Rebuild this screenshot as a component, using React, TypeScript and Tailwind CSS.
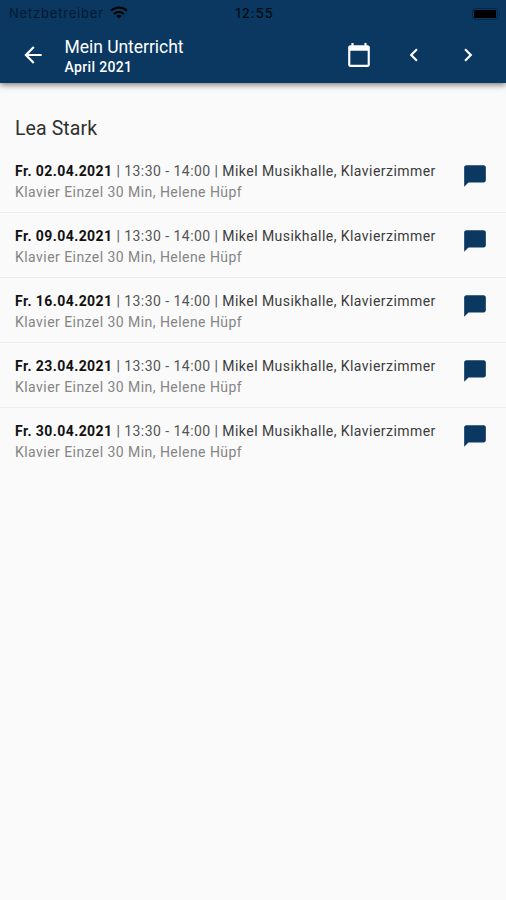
interface Lesson {
  date: string;
  time: string;
  location: string;
  details: string;
}

const lessons: Lesson[] = ["02", "09", "16", "23", "30"].map((day) => ({
  date: `Fr. ${day}.04.2021`,
  time: "13:30 - 14:00",
  location: "Mikel Musikhalle, Klavierzimmer",
  details: "Klavier Einzel 30 Min, Helene Hüpf",
}));

const icons = {
  back: "M20 11H7.83l5.59-5.59L12 4l-8 8 8 8 1.41-1.41L7.83 13H20v-2z",
  calendar:
    "M20 3h-1V1h-2v2H7V1H5v2H4c-1.1 0-2 .9-2 2v16c0 1.1.9 2 2 2h16c1.1 0 2-.9 2-2V5c0-1.1-.9-2-2-2zm0 18H4V8h16v13z",
  left: "M15.41 7.41L14 6l-6 6 6 6 1.41-1.41L10.83 12z",
  right: "M10 6L8.59 7.41 13.17 12l-4.58 4.59L10 18l6-6z",
  chat: "M20 2H4c-1.1 0-2 .9-2 2v18l4-4h14c1.1 0 2-.9 2-2V4c0-1.1-.9-2-2-2z",
};

function Icon({ name }: { name: keyof typeof icons }) {
  return (
    <svg viewBox="0 0 24 24" className="size-[26px] shrink-0 fill-current">
      <path d={icons[name]} />
    </svg>
  );
}

function StatusBar() {
  return (
    <div className="grid h-[27px] grid-cols-3 items-center pl-[9px] pr-[6px] font-['Inter',sans-serif] text-[13px] text-[#04182d]">
      <div className="flex items-center gap-[6px]">
        <span className="w-[95px] tracking-[0.8px]">Netzbetreiber</span>
        <svg viewBox="0 0 18 13" className="mb-[2px] h-[13px] w-[18px] shrink-0 text-black">
          <g fill="none" stroke="currentColor" strokeWidth="2.1">
            <path d="M1 4.8a11.4 11.4 0 0 1 16 0" />
            <path d="M4 8a7.2 7.2 0 0 1 10 0" />
          </g>
          <path d="M9 12.6l-2.6-2.7a3.8 3.8 0 0 1 5.2 0z" fill="currentColor" />
        </svg>
      </div>
      <span className="text-center font-medium tracking-[1px] text-[#020a14]">12:55</span>
      {/* Battery */}
      <div className="flex items-center justify-end gap-px">
        <div className="h-[12px] w-[26px] rounded-[3px] border border-[#062748] p-px">
          <div className="h-full rounded-[1px] bg-black" />
        </div>
        <div className="h-[4px] w-[1.5px] rounded-r-full bg-[#062748]" />
      </div>
    </div>
  );
}

function LessonRow({ lesson }: { lesson: Lesson }) {
  return (
    <li className="flex h-[65px] items-start justify-between border-b border-[#ededed] pt-[13px] pr-[18px] pl-[15px] last:border-b-0">
      <div className="whitespace-nowrap text-[14px] leading-[21px]">
        <p className="tracking-[0.45px] text-[#3c3c3c]">
          <span className="font-bold tracking-[0.43px] text-[#111]">{lesson.date}</span>
          <span className="text-[#555]"> | {lesson.time} | </span>
          {lesson.location}
        </p>
        <p className="tracking-[0.45px] text-[#858585]">{lesson.details}</p>
      </div>
      <button className="mt-[2px] text-[#0a3861]" aria-label="Kommentar">
        <Icon name="chat" />
      </button>
    </li>
  );
}

export default function App() {
  return (
    <div className="min-h-screen bg-[#fafafa] font-['Roboto',sans-serif]">
      <header className="h-[83px] bg-[#0a3861] shadow-[0_2px_6px_rgba(0,0,0,0.5)]">
        <StatusBar />
        <div className="flex h-[56px] items-center pr-[25px] pl-[20px] text-white">
          <button aria-label="Zurück">
            <Icon name="back" />
          </button>
          <div className="ml-[18.5px] flex-1 whitespace-nowrap pt-[4px]">
            <h1 className="text-[17.5px] leading-[20px] tracking-[-0.03px]">Mein Unterricht</h1>
            <p className="text-[14px] leading-[20px] font-medium tracking-[0.35px]">April 2021</p>
          </div>
          <div className="flex gap-[28px]">
            <button className="mr-px" aria-label="Kalender">
              <Icon name="calendar" />
            </button>
            <button aria-label="Vorheriger Monat">
              <Icon name="left" />
            </button>
            <button aria-label="Nächster Monat">
              <Icon name="right" />
            </button>
          </div>
        </div>
      </header>
      <main>
        <h2 className="h-[65px] pt-[34px] pl-[15px] text-[19.5px] leading-[24px] tracking-[0.1px] text-[#303030]">
          Lea Stark
        </h2>
        <ul>
          {lessons.map((lesson) => (
            <LessonRow key={lesson.date} lesson={lesson} />
          ))}
        </ul>
      </main>
    </div>
  );
}
